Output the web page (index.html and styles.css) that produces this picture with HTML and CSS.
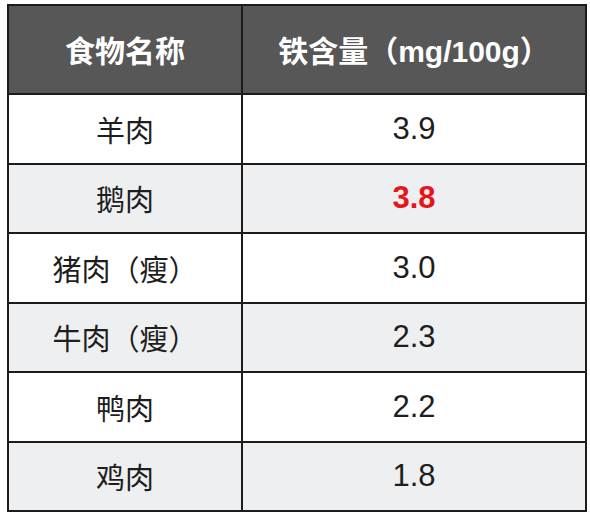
FILE: index.html
```html
<!DOCTYPE html>
<html lang="zh">
<head>
<meta charset="utf-8">
<link rel="stylesheet" href="styles.css">
</head>
<body>
<div class="page">
  <div class="iron-table">
    <div class="cell head">食物名称</div>
    <div class="cell head">铁含量（mg/100g）</div>

    <div class="cell name">羊肉</div>
    <div class="cell num">3.9</div>

    <div class="cell name alt">鹅肉</div>
    <div class="cell num alt hi">3.8</div>

    <div class="cell name">猪肉（瘦）</div>
    <div class="cell num">3.0</div>

    <div class="cell name alt">牛肉（瘦）</div>
    <div class="cell num alt">2.3</div>

    <div class="cell name">鸭肉</div>
    <div class="cell num">2.2</div>

    <div class="cell name alt">鸡肉</div>
    <div class="cell num alt">1.8</div>
  </div>
</div>
</body>
</html>
```

FILE: styles.css
```css
html, body {
  margin: 0;
  padding: 0;
  background: #ffffff;
}

.page {
  width: 590px;
  height: 518px;
  padding: 4px 0 0 7px;
  box-sizing: border-box;
}

.iron-table {
  width: 580px;
  height: 508px;
  box-sizing: border-box;
  display: grid;
  grid-template-columns: 232px 1fr;
  grid-template-rows: 87px repeat(6, 1fr);
  gap: 2px;
  padding: 2px;
  background: #1c1c1c;
}

.cell {
  display: flex;
  align-items: center;
  justify-content: center;
  background: #ffffff;
  color: #1e1e1e;
  font-family: "Noto Sans CJK SC", "Liberation Sans", sans-serif;
  font-size: 29px;
}

.cell.alt {
  background: #eeeff1;
}

.cell.head {
  background: #575757;
  color: #ffffff;
  font-weight: 700;
  font-size: 30px;
  font-family: "Liberation Sans", "Noto Sans CJK SC", sans-serif;
  padding-bottom: 2px;
}

.cell.num {
  font-family: "Liberation Sans", Arial, sans-serif;
  font-size: 31px;
}

.cell.hi {
  color: #e8141b;
  font-weight: 700;
  font-size: 31px;
}
```
